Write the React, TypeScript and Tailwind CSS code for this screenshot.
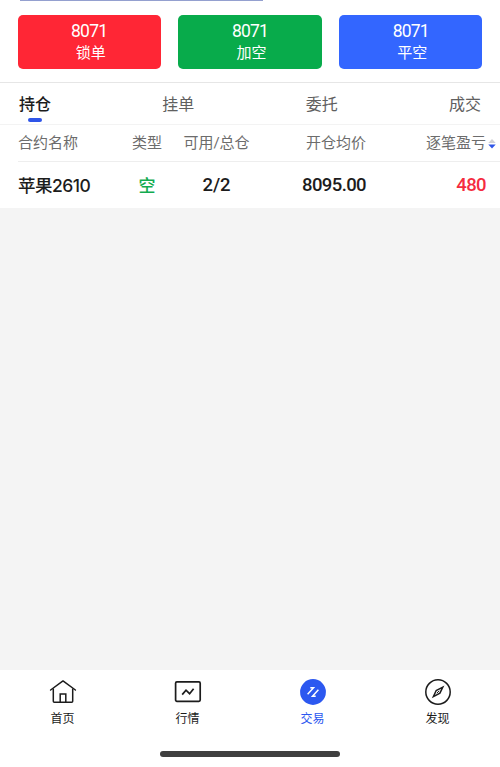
import React from "react";

const actions = [
  { price: "8071", label: "锁单", color: "bg-[#ff2635]" },
  { price: "8071", label: "加空", color: "bg-[#08ab4b]" },
  { price: "8071", label: "平空", color: "bg-[#3366ff]" },
];

const HomeIcon = () => (
  <svg width="28" height="28" viewBox="0 0 28 28" fill="none" stroke="#1c1c1c" strokeWidth="1.5">
    <path d="M1.6 12 14 2.9 26.4 12" strokeLinejoin="round" strokeLinecap="round" />
    <path d="M4.3 10.5v12.7q0 1 1 1h17.4q1 0 1-1V10.5" />
    <path d="M11.2 24.2v-8.2h5.6v8.2" />
  </svg>
);

const MarketIcon = () => (
  <svg width="28" height="28" viewBox="0 0 28 28" fill="none" stroke="#1c1c1c" strokeWidth="1.7">
    <rect x="1.6" y="3.9" width="24.6" height="19.5" rx="1.3" />
    <path d="m8.2 16.6 3.8-4.4 3.6 3.5 4-4.9" />
  </svg>
);

const TradeIcon = () => (
  <svg width="28" height="28" viewBox="0 0 28 28" fill="none">
    <circle cx="14" cy="14" r="12.9" fill="#2c58f0" />
    <path d="m8.6 16.2 5.9-6.4h-3.2" stroke="#fff" strokeWidth="1.5" />
    <path d="m19.4 11.8-5.9 6.4h3.2" stroke="#fff" strokeWidth="1.5" />
  </svg>
);

const DiscoverIcon = () => (
  <svg width="28" height="28" viewBox="0 0 28 28" fill="none" stroke="#1c1c1c">
    <circle cx="14" cy="14" r="12.2" strokeWidth="1.5" />
    <path d="M18.8 9.2 15.9 15.2 9.4 18.6 12.2 12.5Z" strokeWidth="1.5" />
    <path d="m12.8 15.2 2.4-2.4" strokeWidth="1" />
  </svg>
);

const navItems = [
  { label: "首页", icon: <HomeIcon /> },
  { label: "行情", icon: <MarketIcon /> },
  { label: "交易", icon: <TradeIcon />, active: true },
  { label: "发现", icon: <DiscoverIcon /> },
];

const App = () => {
  return (
    <div className="flex h-[767px] w-[500px] flex-col overflow-hidden bg-white font-[Roboto,'Noto_Sans_CJK_SC',sans-serif] text-[#1c1c1c]">
      <div className="h-[15px] shrink-0 pl-5">
        <div className="h-px w-[243px] bg-[#94a0cf]"></div>
      </div>

      <div className="grid h-[53.5px] shrink-0 grid-cols-3 gap-[17.5px] px-[17.5px]">
        {actions.map((item) => (
          <button
            key={item.label}
            className={`flex flex-col items-center rounded-[5px] pt-[6px] text-white ${item.color}`}
          >
            <span className="text-[17.5px] leading-[21px] tracking-[-0.8px]">{item.price}</span>
            <span className="pt-px pl-[3px] text-[15px] leading-[21px]">{item.label}</span>
          </button>
        ))}
      </div>

      <div className="mt-[13.5px] flex h-[42.5px] shrink-0 justify-between border-t border-b border-t-[#e6e6e6] border-b-[#f3f3f3] pr-[19px] pl-[19px] text-[16px] leading-[44px] text-[#606060]">
        <div className="flex flex-col items-center font-medium text-[#1c1c1c]">
          <span>持仓</span>
          <span className="-mt-[9px] h-[3.5px] w-[14px] rounded-full bg-[#2f55e8]"></span>
        </div>
        <div>挂单</div>
        <div>委托</div>
        <div>成交</div>
      </div>

      <div className="ml-[18px] grid h-[37px] shrink-0 grid-cols-[101px_56px_83px_108px_120px_14px] items-center border-b border-[#eeeeee] pt-[2px] text-[15px] text-[#6c6c6c]">
        <div>合约名称</div>
        <div className="text-center">类型</div>
        <div className="text-center">可用/总仓</div>
        <div className="text-right">开仓均价</div>
        <div className="text-right">逐笔盈亏</div>
        <svg className="ml-[2px]" width="8" height="12" viewBox="0 0 8 12">
          <path d="M.3 4.9 4 .9l3.7 4Z" fill="#d0d0d4" />
          <path d="M.3 6.4h7.4L4 10.5Z" fill="#2f55e8" />
        </svg>
      </div>

      <div className="ml-[18px] grid h-[46.5px] shrink-0 grid-cols-[101px_56px_83px_108px_120px] items-center pt-[2px] text-[18.5px] font-medium">
        <div className="font-[Inter,'Noto_Sans_CJK_SC',sans-serif] text-[17.5px] tracking-[-0.5px]">
          苹果2610
        </div>
        <div className="pt-px text-center text-[17px] text-[#12ab50]">空</div>
        <div className="pt-px text-center">2/2</div>
        <div className="pt-px text-right tracking-[-0.6px]">8095.00</div>
        <div className="pt-px text-right tracking-[-0.6px] text-[#f52b40]">480</div>
      </div>

      <div className="flex-1 bg-[#f4f4f4]"></div>

      <div className="flex h-[97px] shrink-0 flex-col items-center">
        <div className="grid w-full grid-cols-4 pt-[8px]">
          {navItems.map((item) => (
            <div key={item.label} className="flex flex-col items-center">
              {item.icon}
              <span
                className={`mt-[5px] text-[12px] leading-4 ${
                  item.active ? "text-[#2c58f0]" : "text-[#1c1c1c]"
                }`}
              >
                {item.label}
              </span>
            </div>
          ))}
        </div>
        <div className="mt-[24px] h-[6px] w-[180px] rounded-full bg-[#3f3f3f]"></div>
      </div>
    </div>
  );
};

export default App;
